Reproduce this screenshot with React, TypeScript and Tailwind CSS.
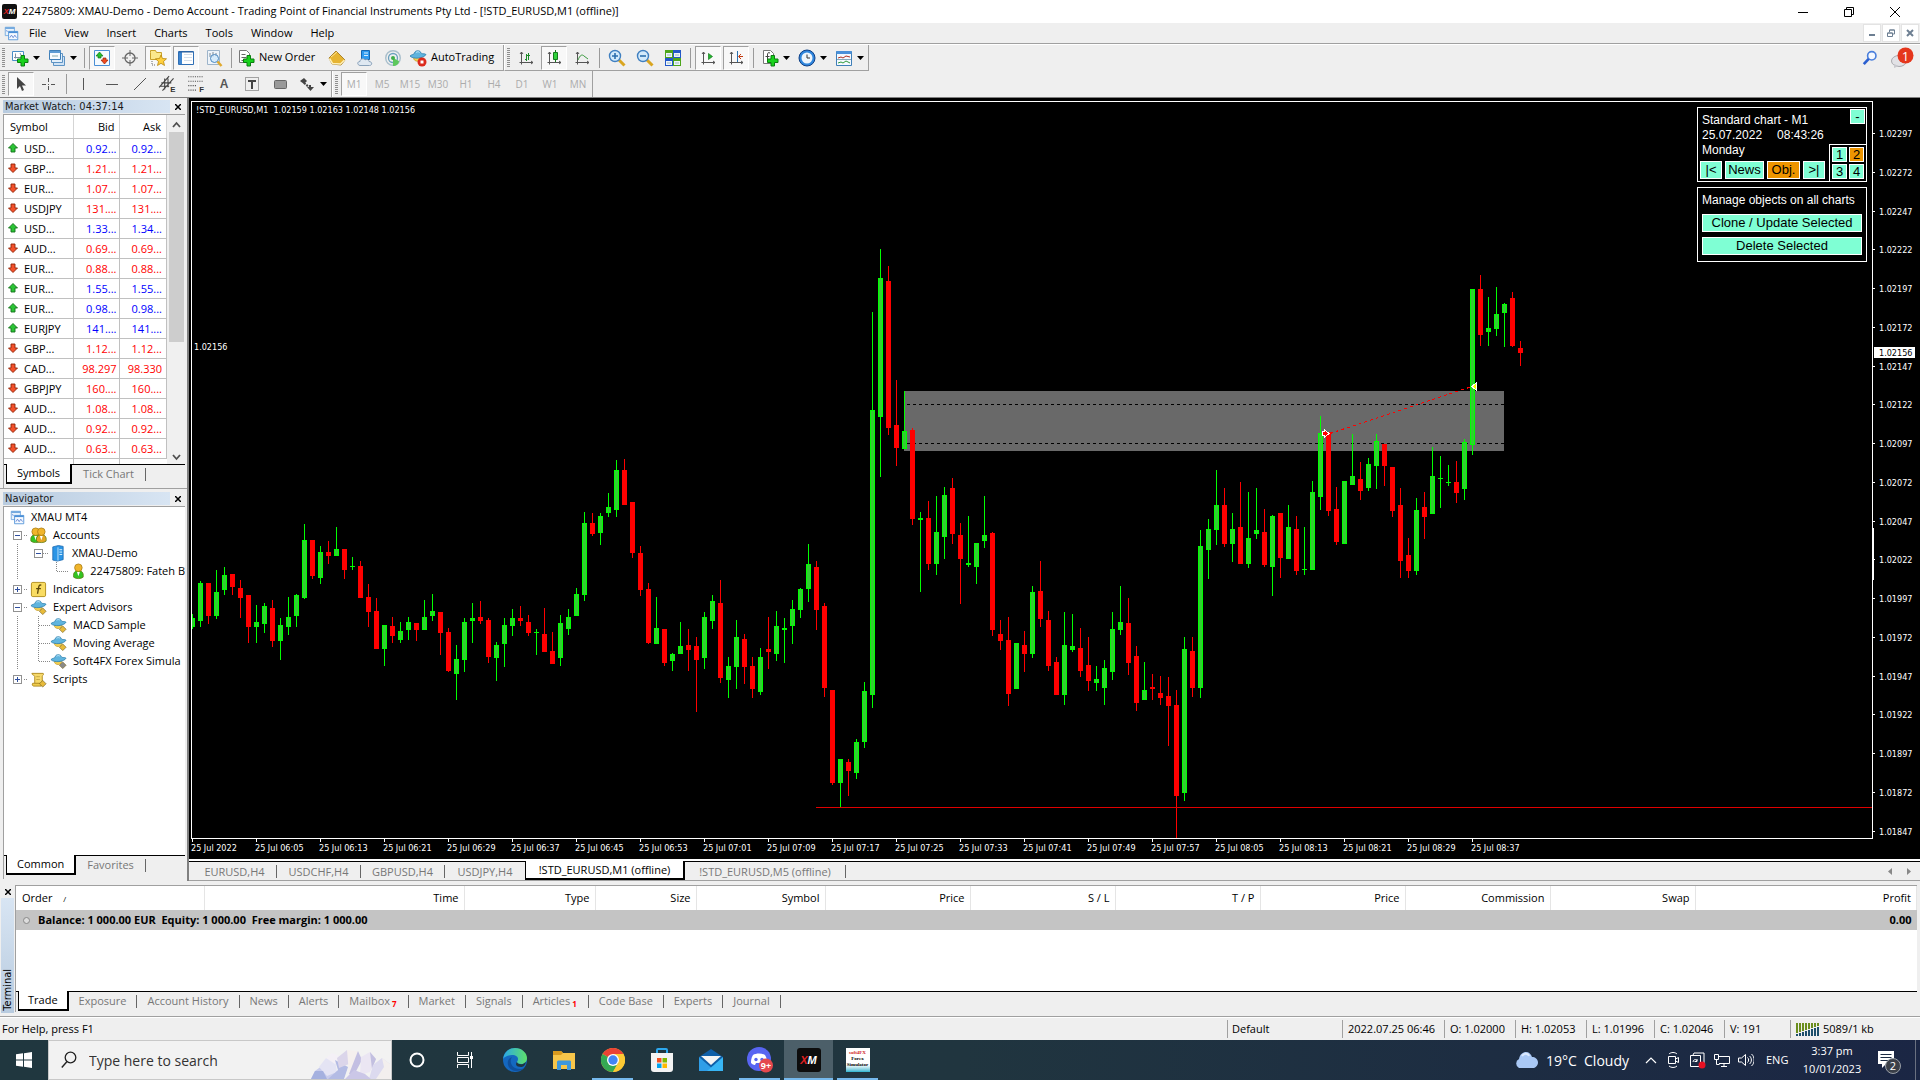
import React from 'react';

type Candle = [string, number, number, number, number];

// color, high, body top, body bottom, low
const candles: Candle[] = [
  ['g', 614, 618, 627, 629], ['g', 581, 583, 621, 627], ['r', 583, 583, 616, 624], ['g', 570, 592, 616, 619],
  ['g', 567, 575, 590, 595], ['r', 574, 574, 587, 595], ['r', 580, 588, 598, 618], ['r', 595, 595, 627, 643],
  ['g', 605, 622, 627, 643], ['g', 603, 606, 624, 633], ['r', 600, 608, 641, 647], ['g', 618, 625, 641, 660],
  ['g', 597, 617, 627, 635], ['g', 594, 595, 616, 627], ['g', 524, 540, 598, 599], ['r', 540, 540, 576, 579],
  ['g', 546, 552, 578, 584], ['r', 541, 552, 556, 564], ['g', 527, 549, 556, 556], ['r', 549, 549, 570, 579],
  ['g', 557, 566, 567, 570], ['r', 561, 566, 598, 598], ['r', 584, 597, 612, 627], ['r', 598, 611, 649, 649],
  ['g', 625, 625, 649, 666], ['r', 617, 626, 636, 643], ['g', 622, 631, 640, 643], ['g', 617, 622, 630, 640],
  ['r', 623, 623, 630, 641], ['g', 600, 617, 630, 630], ['g', 594, 611, 616, 621], ['r', 612, 612, 633, 655],
  ['r', 628, 632, 671, 672], ['g', 645, 659, 674, 700], ['g', 618, 622, 660, 672], ['g', 603, 618, 621, 643],
  ['r', 601, 617, 621, 624], ['r', 618, 620, 657, 663], ['g', 642, 645, 658, 681], ['g', 618, 625, 644, 667],
  ['g', 609, 618, 626, 636], ['r', 606, 618, 621, 626], ['r', 615, 622, 633, 636], ['g', 629, 632, 633, 655],
  ['r', 608, 634, 652, 652], ['r', 632, 651, 664, 664], ['g', 615, 623, 658, 666], ['g', 609, 617, 629, 635],
  ['g', 588, 594, 616, 616], ['g', 512, 523, 595, 601], ['r', 513, 523, 534, 536], ['g', 513, 516, 533, 545],
  ['g', 493, 507, 513, 517], ['g', 460, 470, 510, 517], ['r', 459, 470, 505, 505], ['r', 502, 502, 553, 558],
  ['r', 546, 553, 590, 596], ['r', 583, 589, 643, 644], ['g', 597, 628, 644, 644], ['r', 629, 629, 663, 666],
  ['g', 653, 654, 661, 671], ['g', 622, 646, 654, 654], ['r', 629, 645, 650, 671], ['r', 637, 646, 660, 712],
  ['g', 612, 617, 658, 669], ['g', 595, 601, 621, 629], ['r', 580, 603, 678, 683], ['g', 657, 666, 680, 698],
  ['g', 620, 637, 667, 689], ['r', 634, 639, 667, 684], ['r', 657, 666, 689, 698], ['g', 648, 657, 692, 695],
  ['r', 617, 649, 652, 669], ['g', 611, 626, 654, 661], ['g', 618, 628, 630, 663], ['g', 600, 609, 626, 644],
  ['g', 588, 589, 610, 618], ['g', 544, 564, 589, 602], ['r', 561, 567, 610, 630], ['r', 603, 606, 688, 697],
  ['r', 690, 690, 783, 785], ['g', 759, 759, 783, 807], ['r', 759, 762, 771, 796], ['g', 739, 742, 773, 779],
  ['g', 682, 691, 742, 748], ['g', 312, 410, 695, 708], ['g', 249, 278, 417, 477], ['r', 266, 281, 428, 435],
  ['r', 380, 425, 448, 466], ['g', 391, 431, 449, 449], ['r', 428, 430, 519, 525], ['g', 512, 518, 520, 592],
  ['r', 501, 518, 564, 570], ['g', 496, 532, 564, 575], ['g', 487, 495, 537, 559], ['r', 478, 488, 534, 544],
  ['r', 523, 535, 559, 604], ['g', 516, 563, 565, 567], ['g', 543, 543, 567, 584], ['g', 496, 535, 541, 548],
  ['r', 532, 533, 630, 636], ['r', 620, 634, 641, 650], ['r', 617, 640, 694, 706], ['g', 643, 643, 689, 689],
  ['r', 631, 645, 654, 672], ['g', 586, 592, 654, 658], ['r', 561, 591, 619, 627], ['r', 611, 620, 666, 671],
  ['r', 657, 662, 695, 695], ['g', 612, 645, 695, 705], ['g', 614, 646, 650, 652], ['r', 628, 648, 671, 677],
  ['r', 637, 665, 681, 691], ['g', 666, 679, 683, 691], ['g', 660, 668, 688, 705], ['g', 612, 629, 672, 680],
  ['g', 586, 622, 630, 635], ['r', 598, 623, 663, 675], ['r', 646, 656, 703, 711], ['g', 662, 690, 700, 700],
  ['r', 674, 687, 689, 700], ['r', 676, 693, 698, 705], ['r', 677, 696, 706, 746], ['r', 690, 705, 796, 838],
  ['g', 637, 649, 793, 801], ['r', 637, 651, 688, 697], ['g', 530, 546, 688, 698], ['g', 519, 529, 550, 579],
  ['g', 470, 505, 530, 545], ['r', 488, 505, 544, 547], ['g', 513, 529, 544, 562], ['r', 482, 527, 564, 564],
  ['g', 492, 538, 564, 568], ['g', 488, 530, 534, 539], ['r', 509, 532, 565, 567], ['g', 515, 516, 567, 596],
  ['r', 513, 513, 558, 578], ['g', 505, 527, 559, 559], ['r', 516, 529, 571, 575], ['g', 527, 569, 570, 575],
  ['g', 481, 492, 570, 570], ['g', 416, 433, 497, 510], ['r', 432, 432, 511, 516], ['r', 487, 509, 542, 545],
  ['g', 481, 481, 544, 544], ['g', 434, 476, 485, 485], ['r', 462, 479, 491, 500], ['g', 458, 464, 488, 491],
  ['g', 434, 441, 466, 489], ['r', 444, 444, 466, 486], ['r', 467, 467, 511, 517], ['r', 488, 505, 561, 578],
  ['r', 538, 555, 571, 578], ['g', 498, 510, 571, 575], ['r', 492, 507, 517, 539], ['g', 447, 476, 514, 514],
  ['g', 456, 478, 479, 508], ['g', 465, 482, 483, 486], ['r', 461, 482, 493, 503], ['g', 439, 442, 489, 500],
  ['g', 289, 289, 445, 455], ['r', 275, 289, 335, 346], ['g', 297, 328, 332, 346], ['g', 287, 314, 329, 336],
  ['g', 303, 304, 313, 347], ['r', 292, 298, 346, 347], ['r', 341, 348, 353, 366],
];

const quotes: [string, string, string, string][] = [
  ['up', 'USD...', '0.92...', '0.92...'],
  ['down', 'GBP...', '1.21...', '1.21...'],
  ['down', 'EUR...', '1.07...', '1.07...'],
  ['down', 'USDJPY', '131....', '131....'],
  ['up', 'USD...', '1.33...', '1.34...'],
  ['down', 'AUD...', '0.69...', '0.69...'],
  ['down', 'EUR...', '0.88...', '0.88...'],
  ['up', 'EUR...', '1.55...', '1.55...'],
  ['up', 'EUR...', '0.98...', '0.98...'],
  ['up', 'EURJPY', '141....', '141....'],
  ['down', 'GBP...', '1.12...', '1.12...'],
  ['down', 'CAD...', '98.297', '98.330'],
  ['down', 'GBPJPY', '160....', '160....'],
  ['down', 'AUD...', '1.08...', '1.08...'],
  ['down', 'AUD...', '0.92...', '0.92...'],
  ['down', 'AUD...', '0.63...', '0.63...'],
];

const timeLabels = Array.from({ length: 21 }, (_, i) => {
  if (i === 0) return '25 Jul 2022';
  const m = 5 + 8 * (i - 1);
  const two = (n: number) => String(n).padStart(2, '0');
  return `25 Jul ${two(6 + Math.floor(m / 60))}:${two(m % 60)}`;
});

const priceLabels = Array.from({ length: 19 }, (_, i) => ((102297 - 25 * i) / 100000).toFixed(5));

const Svg: React.FC<{ s?: number; children: React.ReactNode }> = ({ s = 18, children }) => (
  <svg width={s} height={s} viewBox="0 0 18 18" fill="none" className="shrink-0" aria-hidden="true">
    {children}
  </svg>
);

const Caret = () => (
  <svg width="7" height="4" viewBox="0 0 7 4" className="shrink-0" aria-hidden="true">
    <path d="M0 0h7L3.500 4z" fill="#000" />
  </svg>
);

const GreenPlus = () => (
  <path d="M10 6.500h3.500v3.500H17v3.500h-3.500V17H10v-3.500H6.500V10H10z" fill="#18d21c" stroke="#0b7d10" />
);

const AxisIcon: React.FC<{ children: React.ReactNode }> = ({ children }) => (
  <Svg>
    <path d="M4.500 3v12.500M2.500 13.500H16M3 5l1.500-2L6 5M14 12l2 1.500L14 15" stroke="#555" />
    {children}
  </Svg>
);

const ToolButton: React.FC<{ label: string; pressed?: boolean; children: React.ReactNode }> = ({
  label,
  pressed,
  children,
}) => (
  <button
    type="button"
    aria-label={label}
    className={
      pressed
        ? 'flex h-6 w-[26px] mx-px shrink-0 items-center justify-center border border-[#a0a0a0] border-r-white border-b-white bg-[#f8f8f8]'
        : 'flex h-6 w-7 shrink-0 items-center justify-center'
    }
  >
    {children}
  </button>
);

const DropButton: React.FC<{ label: string; children: React.ReactNode }> = ({ label, children }) => (
  <button type="button" aria-label={label} className="flex h-6 w-[37px] shrink-0 items-center justify-center gap-1">
    {children}
    <Caret />
  </button>
);

const Sep = () => <div className="mx-[3px] h-5 w-px shrink-0 bg-[#9a9a9a]" />;

const Grip = () => (
  <div className="flex w-[7px] shrink-0 flex-col items-center gap-px">
    {Array.from({ length: 10 }, (_, i) => (
      <div key={i} className="h-px w-[3px] bg-[#8f8f8f]" />
    ))}
  </div>
);

const ChartsIcon: React.FC<{ s?: number }> = ({ s }) => (
  <Svg s={s}>
    <path d="M1.500 1.500h11v10h-11z" fill="#e8f3fc" stroke="#6ba4dc" />
    <path d="M1.500 2.500h11" stroke="#6ba4dc" strokeWidth="2" />
    <path d="M5.500 6.500h11v10h-11z" fill="#f4f9ff" stroke="#4a8fd6" />
    <path d="M5.500 7.500h11" stroke="#4a8fd6" strokeWidth="2" />
    <path d="M7 14l2-3 2 3 2-3 2 3" stroke="#5a7fd0" />
    <path d="M3 5l1 2" stroke="#5a7fd0" />
  </Svg>
);

const HatIcon: React.FC<{ tag: string; s?: number }> = ({ tag, s }) => (
  <Svg s={s}>
    <path d="M4.500 8.500c0 5 8 5 8 0z" fill="#f3cf52" stroke="#c39a1f" strokeWidth=".7" />
    <path d="M1 7c2-2 4-1 4.500-3C6 1 11.500 1 12 4c.5 1.500 3 0 5 1.500C15 9.500 4 10.500 1 7z" fill="#5fb4de" stroke="#2d7fae" strokeWidth=".8" />
    <path d="M7 3.500c1-1 3-1 3.500 0" stroke="#c6e9fa" />
    {tag === 'stop' ? (
      <>
        <circle cx="13" cy="13" r="4.500" fill="#dc2a1c" />
        <path d="M11.500 11.500h3v3h-3z" fill="#fff" />
      </>
    ) : (
      <path d="M13.500 9.500l3.500 3.500-3.500 3.500L10 13z" fill={tag} stroke="#7a6420" strokeWidth=".7" />
    )}
  </Svg>
);

const MenuBar = () => (
  <nav className="flex h-5 shrink-0 items-center bg-[#efefef] pl-1 text-[11px] leading-5">
    <ChartsIcon s={15} />
    <div className="flex flex-1 gap-[18px] pl-[10px]">
      {['File', 'View', 'Insert', 'Charts', 'Tools', 'Window', 'Help'].map((m) => (
        <button key={m} type="button">
          {m}
        </button>
      ))}
    </div>
    <div className="flex gap-px pr-px">
      <button type="button" aria-label="Minimize chart" className="flex h-[18px] w-[18px] items-center justify-center border border-[#e3e3e3] bg-white">
        <svg width="8" height="8"><path d="M1 6h6" stroke="#6d7f92" strokeWidth="2" /></svg>
      </button>
      <button type="button" aria-label="Restore chart" className="flex h-[18px] w-[18px] items-center justify-center border border-[#e3e3e3] bg-white">
        <svg width="8" height="8"><path d="M2.500 3V1h5v4H6M.5 4h5v3.500h-5zM2.500 1h5M.5 4h5" stroke="#6d7f92" fill="none" /></svg>
      </button>
      <button type="button" aria-label="Close chart" className="flex h-[18px] w-[18px] items-center justify-center border border-[#e3e3e3] bg-white">
        <svg width="8" height="8"><path d="M1 1l6 6M7 1L1 7" stroke="#6d7f92" strokeWidth="2" /></svg>
      </button>
    </div>
  </nav>
);

const MainToolbar = () => (
  <div className="flex h-[26px] items-center">
    <div className="flex h-[26px] items-center border-r border-b border-[#a0a0a0]">
      <Grip />
      <DropButton label="New chart">
        <Svg>
          <path d="M1.500 2.500h11v9h-11z" fill="#fff" stroke="#4a8fc8" />
          <path d="M4.500 4.500v5M3 8.500h7M9 4l1 2" stroke="#7a8fa5" />
          <GreenPlus />
        </Svg>
      </DropButton>
      <DropButton label="Profiles">
        <Svg>
          <path d="M5.500 7.500h11v9h-11z" fill="#cfe2f5" stroke="#5d93c4" />
          <path d="M3.500 4.500h11v9h-11z" fill="#e3effa" stroke="#5d93c4" />
          <path d="M1.500 1.500h11v9h-11z" fill="#f5faff" stroke="#3f7fb8" />
          <path d="M1.500 3h11" stroke="#5d9bd4" strokeWidth="2" />
          <path d="M4 7h6" stroke="#8aa" />
        </Svg>
      </DropButton>
      <Sep />
      <ToolButton label="Market Watch" pressed>
        <Svg>
          <path d="M1.500 1.500h15v15h-15z" fill="#f4faff" stroke="#4a8fd6" />
          <path d="M6.500 3l3.500 4H8v2H5V7H3z" fill="#23c02b" stroke="#14741a" strokeWidth=".7" />
          <path d="M11.500 15L8 11h2V9h3v2h2z" fill="#ef4a20" stroke="#9a2408" strokeWidth=".7" />
        </Svg>
      </ToolButton>
      <ToolButton label="Data Window">
        <Svg>
          <circle cx="9" cy="9" r="5" stroke="#666" strokeWidth="1.300" />
          <path d="M9 1v6M9 11v6M1 9h6M11 9h6" stroke="#666" />
        </Svg>
      </ToolButton>
      <ToolButton label="Navigator" pressed>
        <Svg>
          <path d="M1.500 3.500v-2h5l1 2h5v7h-11z" fill="#fbe88c" stroke="#c8a12a" />
          <path d="M3 12v4h4" stroke="#666" strokeDasharray="1 1" />
          <path d="M12 6l1.500 3.500 4 .3-3 2.700 1 4-3.500-2.200L8.500 16.500l1-4-3-2.700 4-.3z" fill="#ffcf3d" stroke="#b8860b" strokeWidth=".8" />
        </Svg>
      </ToolButton>
      <ToolButton label="Terminal" pressed>
        <Svg>
          <path d="M1.500 2.500h15v13h-15z" fill="#fff" stroke="#2f6fb5" />
          <path d="M2 3h3v12H2z" fill="#3f86d0" />
          <path d="M7 5.500h8M7 8.500h8M7 11.500h8" stroke="#d4deea" />
          <path d="M2 3h14" stroke="#2b5d98" />
        </Svg>
      </ToolButton>
      <ToolButton label="Strategy Tester">
        <Svg>
          <path d="M2.500 1.500h12v14h-12z" fill="#eef4fa" stroke="#9db4ca" />
          <path d="M5 4v4M8 3v5M11 4v3" stroke="#7a8a99" />
          <circle cx="9.500" cy="9.500" r="4" fill="#cfe8fb" fillOpacity=".8" stroke="#4b88c0" />
          <path d="M12.500 12.500L16.500 17" stroke="#e0a92e" strokeWidth="2.500" />
        </Svg>
      </ToolButton>
      <Sep />
      <button type="button" className="flex h-6 w-[88px] items-center gap-1 pl-[2px] text-[11px] whitespace-nowrap">
        <Svg>
          <path d="M2.500 1.500h7l3 3v9h-10z" fill="#fff" stroke="#777" />
          <path d="M4.500 5.500h4M4.500 8.500h5M4.500 11.500h3" stroke="#666" />
          <GreenPlus />
        </Svg>
        New Order
      </button>
      <ToolButton label="MetaEditor">
        <Svg>
          <path d="M1 9l7-7 9 9-4 5-9-1z" fill="#e6b432" stroke="#9b7013" strokeWidth=".8" />
          <path d="M1.500 9.500l3 5 8 .5 4-4" stroke="#fff0b8" strokeWidth="1.500" />
          <path d="M3 8l6-5" stroke="#ffe694" />
        </Svg>
      </ToolButton>
      <ToolButton label="Virtual Hosting">
        <Svg>
          <path d="M5.500 1.500h8v9h-8z" fill="#2f9bf0" stroke="#1667b0" />
          <path d="M8 4h4M8 6.500h4" stroke="#d7efff" />
          <path d="M4 16.500c-3-.5-3-4 0-4 0-3 4-3.500 5-1.500 2-1.500 4 0 4 1.500 3.500 0 3.500 4 .5 4z" fill="#dfe8f1" stroke="#8aa2ba" />
        </Svg>
      </ToolButton>
      <ToolButton label="Signals">
        <Svg>
          <circle cx="9" cy="9" r="7.300" stroke="#a9bfcc" strokeWidth="1.400" />
          <circle cx="9" cy="9" r="4.500" stroke="#6aa0bd" strokeWidth="1.300" />
          <path d="M9 9v8c3 0 6-2 6-5z" fill="#5dc85d" />
          <circle cx="9" cy="9" r="2" fill="#3fae49" />
        </Svg>
      </ToolButton>
      <button type="button" className="flex h-6 w-24 items-center gap-1 pl-[2px] text-[11px] whitespace-nowrap">
        <HatIcon tag="stop" />
        AutoTrading
      </button>
    </div>
    <div className="flex h-[26px] items-center border-r border-b border-l border-[#a0a0a0] border-l-white">
      <Grip />
      <ToolButton label="Bar Chart">
        <AxisIcon>
          <path d="M9.500 5v7M8 10.500h1.500M9.500 6.500H13M11.500 4v7" stroke="#1c8a28" />
        </AxisIcon>
      </ToolButton>
      <ToolButton label="Candlesticks" pressed>
        <AxisIcon>
          <path d="M10.500 1v12" stroke="#147a1d" />
          <path d="M8.500 3.500h4v7h-4z" fill="#2fd23a" stroke="#147a1d" />
        </AxisIcon>
      </ToolButton>
      <ToolButton label="Line Chart">
        <AxisIcon>
          <path d="M5 11c2-5 4-6 6-4l4 3" stroke="#3a9a3f" />
        </AxisIcon>
      </ToolButton>
      <Sep />
      <ToolButton label="Zoom In">
        <Svg>
          <path d="M11 11l5.500 5.500" stroke="#d9a520" strokeWidth="3" />
          <circle cx="7" cy="7" r="5.500" fill="#d3eafb" stroke="#3f7fc0" strokeWidth="1.400" />
          <path d="M7 4v6M4 7h6" stroke="#2d6fae" strokeWidth="1.600" />
        </Svg>
      </ToolButton>
      <ToolButton label="Zoom Out">
        <Svg>
          <path d="M11 11l5.500 5.500" stroke="#d9a520" strokeWidth="3" />
          <circle cx="7" cy="7" r="5.500" fill="#d3eafb" stroke="#3f7fc0" strokeWidth="1.400" />
          <path d="M4 7h6" stroke="#2d6fae" strokeWidth="1.600" />
        </Svg>
      </ToolButton>
      <ToolButton label="Tile Windows">
        <Svg>
          <path d="M1 1h8v8H1zM9 9h8v8H9z" fill="#4ea61c" />
          <path d="M9 1h8v8H9zM1 9h8v8H1z" fill="#2358c8" />
          <path d="M2 4h6v4H2zM10 4h6v4h-6zM2 12h6v4H2zM10 12h6v4h-6z" fill="#eef4fb" />
          <path d="M3 6h4M11 6h4M3 14h4M11 14h4" stroke="#9bb" />
        </Svg>
      </ToolButton>
      <Sep />
      <ToolButton label="Auto Scroll" pressed>
        <AxisIcon>
          <path d="M9.500 4.500v6l4-3z" fill="#23b52e" stroke="#147a1d" strokeWidth=".7" />
        </AxisIcon>
      </ToolButton>
      <ToolButton label="Chart Shift" pressed>
        <AxisIcon>
          <path d="M10.500 2v11" stroke="#2a70b0" />
          <path d="M16 7.500h-4M14 5l-2.500 2.500L14 10" stroke="#c33a10" />
        </AxisIcon>
      </ToolButton>
      <Sep />
      <DropButton label="Indicators">
        <Svg>
          <path d="M2.500 1.500h7l3 3v10h-10z" fill="#fff" stroke="#777" />
          <path d="M9 4c-2-1-2.500 0-2.500 2v6M4.500 7.500h4" stroke="#444" />
          <GreenPlus />
        </Svg>
      </DropButton>
      <DropButton label="Periods">
        <Svg>
          <circle cx="9" cy="9" r="8" fill="#2f86dd" stroke="#0f3f86" />
          <circle cx="9" cy="9" r="5.500" fill="#eef5fc" />
          <path d="M9 5.500V9h3" stroke="#333" />
        </Svg>
      </DropButton>
      <DropButton label="Templates">
        <Svg>
          <path d="M1.500 2.500h15v14h-15z" fill="#f4f9ff" stroke="#3f7fb8" />
          <path d="M1.500 3.500h15" stroke="#4a90d9" strokeWidth="3" />
          <path d="M3 9l3-1 2 1 3-2 4 1" stroke="#b03020" />
          <path d="M2 10.500h14" stroke="#8ab" />
          <path d="M3 14l3-1 2 1 3-2 4 2" stroke="#2f9a3c" />
        </Svg>
      </DropButton>
    </div>
    <div className="flex-1" />
    <button type="button" aria-label="Search" className="mr-3">
      <Svg s={16}>
        <circle cx="11" cy="6.500" r="4.700" stroke="#4a7fdc" strokeWidth="1.800" fill="#f4f8ff" />
        <path d="M7.500 10L2 16" stroke="#2a5fd0" strokeWidth="3" />
      </Svg>
    </button>
    <button type="button" aria-label="Notifications" className="relative mr-[6px] h-6 w-6">
      <svg width="24" height="24" viewBox="0 0 24 24" aria-hidden="true">
        <ellipse cx="9" cy="15" rx="7.500" ry="5.500" fill="#e2e2e6" stroke="#a9a9ae" />
        <path d="M4 18l0 4 5-2z" fill="#c9c9ce" />
        <circle cx="15.500" cy="9.500" r="8" fill="#e5361c" />
      </svg>
      <span className="absolute top-0 right-0 w-[17px] text-center text-[13px] leading-5 text-white">1</span>
    </button>
  </div>
);

const LineToolbar = () => (
  <div className="flex h-[26px] items-center">
    <div className="flex h-[26px] items-center border-r border-[#a0a0a0]">
      <Grip />
      <ToolButton label="Cursor" pressed>
        <Svg><path d="M5 2v12l3-3 2 5 2-1-2-4.500h4z" fill="#444" /></Svg>
      </ToolButton>
      <ToolButton label="Crosshair">
        <Svg><path d="M8.500 3v4M8.500 11v4M2 9.500h4M11 9.500h4M8 9.500h1" stroke="#555" /></Svg>
      </ToolButton>
      <Sep />
      <ToolButton label="Vertical Line">
        <Svg><path d="M8.500 3v12" stroke="#555" /></Svg>
      </ToolButton>
      <ToolButton label="Horizontal Line">
        <Svg><path d="M3 9.500h12" stroke="#555" /></Svg>
      </ToolButton>
      <ToolButton label="Trendline">
        <Svg><path d="M3 15L15 3" stroke="#555" /></Svg>
      </ToolButton>
      <ToolButton label="Equidistant Channel">
        <Svg s={20}>
          <path d="M1 12L10 2M4 15L14 4M3 8h9M2 11h8M6 4v10M9 4v8" stroke="#444" />
          <text x="11" y="16" fontSize="7" fontWeight="bold" fill="#333" fontFamily="Liberation Sans, sans-serif">E</text>
        </Svg>
      </ToolButton>
      <ToolButton label="Fibonacci Retracement">
        <Svg s={20}>
          <path d="M2 2.500h14M2 6.500h14M2 10.500h8M2 14.500h8" stroke="#555" strokeDasharray="1 1" />
          <text x="12" y="16" fontSize="7" fontWeight="bold" fill="#333" fontFamily="Liberation Sans, sans-serif">F</text>
        </Svg>
      </ToolButton>
      <ToolButton label="Text">
        <span className="font-['Liberation_Sans',sans-serif] text-[12px] font-bold text-[#555]">A</span>
      </ToolButton>
      <ToolButton label="Text Label">
        <Svg>
          <path d="M2.500 2.500h13v13h-13z" stroke="#555" strokeDasharray="1 1" />
          <path d="M5 6h8M9 6v8" stroke="#444" strokeWidth="2" />
        </Svg>
      </ToolButton>
      <ToolButton label="Rectangle">
        <Svg><rect x="3.500" y="5.500" width="12" height="8" rx="1" fill="#999" stroke="#666" /></Svg>
      </ToolButton>
      <DropButton label="Arrows">
        <Svg>
          <path d="M2 6l4-3 3 3-3 3z" fill="#444" />
          <path d="M6 8l5 4" stroke="#444" strokeDasharray="2 1" strokeWidth="2" />
          <path d="M9 12h7l-3.500 4z" fill="#444" />
          <path d="M12 10v3" stroke="#444" strokeWidth="2" />
        </Svg>
      </DropButton>
    </div>
    <div className="flex h-[26px] items-center border-r border-l border-[#a0a0a0] border-l-white">
      <Grip />
      {['M1', 'M5', 'M15', 'M30', 'H1', 'H4', 'D1', 'W1', 'MN'].map((p, i) => (
        <ToolButton key={p} label={p} pressed={i === 0}>
          <span className="text-[10px] text-[#ababab]">{p}</span>
        </ToolButton>
      ))}
    </div>
  </div>
);

const PanelTitle: React.FC<{ title: string }> = ({ title }) => (
  <div className="flex h-[13px] shrink-0 items-center">
    <h2 className="h-[13px] flex-1 bg-linear-to-r from-[#b8cbdf] to-[#d8e5f3] pl-[2px] text-[11px] leading-[13px] font-['DejaVu_Sans_Condensed','Open_Sans',sans-serif] whitespace-nowrap text-[#1a1a1a]">
      {title}
    </h2>
    <button type="button" aria-label={`Close ${title}`} className="flex w-[15px] items-center justify-center">
      <svg width="6" height="6"><path d="M0 0l6 6M6 0L0 6" stroke="#000" strokeWidth="1.500" /></svg>
    </button>
  </div>
);

const PanelTabs: React.FC<{ tabs: string[] }> = ({ tabs }) => (
  <div className="flex h-6 shrink-0 border-t border-black bg-[#efefef] pl-[2px]">
    <button type="button" className="-mt-px h-[20px] border border-t-0 border-r-2 border-b-2 border-black bg-white px-[10px] text-[11px] leading-[18px]">
      {tabs[0]}
    </button>
    <button type="button" className="h-[18px] px-[11px] text-[11px] leading-[18px] text-[#777]">{tabs[1]}</button>
    <div className="mt-[3px] h-[13px] w-px bg-[#666]" />
  </div>
);

const QuoteArrow: React.FC<{ dir: string }> = ({ dir }) =>
  dir === 'up' ? (
    <svg width="10" height="10" viewBox="0 0 10 10" aria-hidden="true">
      <path d="M5 .5l4.500 4.500H7v4H3V5H.5z" fill="#2bc435" stroke="#127019" strokeWidth=".9" />
    </svg>
  ) : (
    <svg width="10" height="10" viewBox="0 0 10 10" aria-hidden="true">
      <path d="M5 9.500L.5 5H3V1h4v4h2.500z" fill="#f4512a" stroke="#8f2408" strokeWidth=".9" />
    </svg>
  );

const MarketWatch = () => (
  <section className="flex h-[391px] shrink-0 flex-col border-b border-[#a0a0a0] pt-[2px] pr-[2px] pl-[3px]">
    <PanelTitle title="Market Watch: 04:37:14" />
    <div className="mt-px flex min-h-0 flex-1 flex-col border-t border-l border-[#a0a0a0] bg-white">
      <div className="flex min-h-0 flex-1 overflow-hidden">
        <div className="min-w-0 flex-1">
          <table className="w-full table-fixed border-collapse text-[11px] leading-[19px]">
            <thead>
              <tr className="h-[23px]">
                <th className="w-[69px] border-r border-b border-[#d5d5d5] border-b-[#c0c0c0] pl-[6px] text-left font-normal">Symbol</th>
                <th className="w-[46px] border-r border-b border-[#d5d5d5] border-b-[#c0c0c0] pr-1 text-right font-normal">Bid</th>
                <th className="border-r border-b border-[#d5d5d5] border-b-[#c0c0c0] pr-[5px] text-right font-normal">Ask</th>
              </tr>
            </thead>
            <tbody>
              {quotes.map(([dir, symbol, bid, ask], i) => (
                <tr key={i} className="h-5">
                  <td className="border-r border-b border-[#c0c0c0] pl-1">
                    <div className="flex items-center gap-[6px]">
                      <QuoteArrow dir={dir} />
                      {symbol}
                    </div>
                  </td>
                  <td className={`border-r border-b border-[#c0c0c0] pr-[2px] text-right ${dir === 'up' ? 'text-[#0000ff]' : 'text-[#ff0000]'}`}>{bid}</td>
                  <td className={`border-r border-b border-[#c0c0c0] pr-[4px] text-right ${dir === 'up' ? 'text-[#0000ff]' : 'text-[#ff0000]'}`}>{ask}</td>
                </tr>
              ))}
              <tr className="h-5">
                <td className="border-r border-[#c0c0c0]" />
                <td className="border-r border-[#c0c0c0]" />
                <td />
              </tr>
            </tbody>
          </table>
        </div>
        <div className="flex w-[18px] flex-col items-center bg-[#f0f0f0] text-[#505050]">
          <svg width="9" height="17" className="shrink-0"><path d="M1 12l3.500-4L8 12" stroke="currentColor" strokeWidth="1.800" fill="none" /></svg>
          <div className="h-[210px] w-[15px] bg-[#cdcdcd]" />
          <div className="flex-1" />
          <svg width="9" height="14" className="shrink-0"><path d="M1 5l3.500 4L8 5" stroke="currentColor" strokeWidth="1.800" fill="none" /></svg>
        </div>
      </div>
      <PanelTabs tabs={['Symbols', 'Tick Chart']} />
    </div>
  </section>
);

const Toggle: React.FC<{ open: boolean }> = ({ open }) => (
  <svg width="9" height="9" className="shrink-0" aria-hidden="true">
    <rect x=".5" y=".5" width="8" height="8" fill="#fff" stroke="#919191" />
    <path d={open ? 'M2 4.500h5' : 'M2 4.500h5M4.500 2v5'} stroke="#2f4f9f" />
  </svg>
);

const PersonShape: React.FC<{ x: number; body?: string }> = ({ x, body = '#33c422' }) => (
  <g transform={`translate(${x} 0)`}>
    <path d="M1 15c-1-5 2-7 5-7s6 2 5 7c-2 2-8 2-10 0z" fill={body} stroke="#5c7a12" strokeWidth=".8" />
    <circle cx="6" cy="5" r="4" fill="#f0b52c" stroke="#a87a12" strokeWidth=".8" />
    <path d="M4.500 9.500L6 14l1.500-4.500" fill="#fff" />
  </g>
);

const Dots: React.FC<{ w?: number }> = ({ w = 6 }) => (
  <svg width={w} height="1" className="shrink-0" aria-hidden="true">
    <path d={`M0 .5h${w}`} stroke="#888" strokeDasharray="1 1" />
  </svg>
);

const Branch: React.FC<{ last?: boolean }> = ({ last }) => (
  <svg width="12" height="18" className="shrink-0" aria-hidden="true">
    <path d={last ? 'M.5 0v9.500M1 9.500h11' : 'M.5 0v18M1 9.500h11'} stroke="#888" strokeDasharray="1 1" fill="none" />
  </svg>
);

// the dotted line that joins the root items
const Trunk: React.FC = () => (
  <svg width="13" height="18" className="shrink-0" aria-hidden="true">
    <path d="M4.500 0v18" stroke="#888" strokeDasharray="1 1" />
  </svg>
);

const Navigator = () => (
  <section className="flex min-h-0 flex-1 flex-col pt-[3px] pr-[2px] pl-[3px]">
    <PanelTitle title="Navigator" />
    <div className="mt-px flex min-h-0 flex-1 flex-col border-t border-l border-[#a0a0a0] bg-white">
      <ul className="flex-1 overflow-hidden pt-px text-[11px] leading-[18px] whitespace-nowrap">
        <li className="flex h-[18px] items-center gap-[6px] pl-[6px]"><ChartsIcon s={15} />XMAU MT4</li>
        <li className="flex h-[18px] items-center gap-[2px] pl-[9px]">
          <Toggle open /><Dots w={4} />
          <Svg s={17}><PersonShape x={0} /><PersonShape x={6} body="#e3a622" /></Svg>
          <span className="pl-1">Accounts</span>
        </li>
        <li className="flex h-[18px] items-center pl-[9px]">
          <Trunk />
          <span className="w-2" /><Toggle open /><Dots />
          <Svg s={17}>
            <path d="M4 2l6-1.500 5 1v14L9 17l-5-1z" fill="#2b95e6" stroke="#1765ad" strokeWidth=".8" />
            <path d="M9.500 2.500v14" stroke="#bfe2fb" />
            <path d="M11 5h3M11 7.500h3M11 10h3" stroke="#e8f6ff" />
          </Svg>
          <span className="pl-[6px]">XMAU-Demo</span>
        </li>
        <li className="flex h-[18px] items-center pl-[9px]">
          <Trunk />
          <span className="w-[34px]" /><Branch last />
          <Svg s={17}><PersonShape x={5} /></Svg>
          <span className="pl-[5px]">22475809: Fateh B</span>
        </li>
        <li className="flex h-[18px] items-center gap-[2px] pl-[9px]">
          <Toggle open={false} /><Dots w={4} />
          <Svg s={17}>
            <rect x="1.500" y="1.500" width="15" height="15" rx="1.500" fill="#f9dc62" stroke="#b38e1c" />
            <path d="M12 4.500c-2-1-2.500.5-3 3l-1 6M6.500 8h5" stroke="#5a4508" strokeWidth="1.400" />
          </Svg>
          <span className="pl-1">Indicators</span>
        </li>
        <li className="flex h-[18px] items-center gap-[2px] pl-[9px]">
          <Toggle open /><Dots w={4} />
          <HatIcon tag="#e8bb3a" s={17} />
          <span className="pl-1">Expert Advisors</span>
        </li>
        {['MACD Sample', 'Moving Average', 'Soft4FX Forex Simula'].map((name, i) => (
          <li key={name} className="flex h-[18px] items-center pl-[9px]">
            <Trunk />
            <span className="w-3" /><Branch last={i === 2} />
            <HatIcon tag={i === 2 ? '#8a8a8a' : '#e8bb3a'} s={17} />
            <span className="pl-[6px]">{name}</span>
          </li>
        ))}
        <li className="flex h-[18px] items-center gap-[2px] pl-[9px]">
          <Toggle open={false} /><Dots w={4} />
          <Svg s={17}>
            <path d="M2 2.500h12c1 2-1 2-1 3v8H5v-8c0-1-3-1-3-3z" fill="#f6d96a" stroke="#b08c22" />
            <path d="M3 13h9v3H4c-2 0-2-3-1-3z" fill="#efcb4c" stroke="#b08c22" />
            <path d="M7 6h4M7 9h4" stroke="#9a7a20" strokeDasharray="1 1" />
            <path d="M13.500 10l3.500 3.500-3.500 3.500-3.500-3.500z" fill="#e8bb3a" stroke="#7a6420" strokeWidth=".7" />
          </Svg>
          <span className="pl-1">Scripts</span>
        </li>
      </ul>
      <PanelTabs tabs={['Common', 'Favorites']} />
    </div>
  </section>
);

const PlotButton: React.FC<{ className: string; active?: boolean; children: React.ReactNode }> = ({
  className,
  active,
  children,
}) => (
  <button
    type="button"
    className={`flex items-center justify-center border border-white whitespace-nowrap text-black ${active ? 'bg-[#ee9500]' : 'bg-[#7fffd4]'} ${className}`}
  >
    {children}
  </button>
);

const SimulatorPanel = () => (
  <div className="absolute top-[5px] right-[5px] w-[170px] font-['Liberation_Sans',sans-serif] text-[13px] text-white">
    <div className="flex h-[75px] flex-col border border-white bg-black">
      <div className="flex flex-1">
        <div className="flex-1 pt-[5px] pl-1 text-[12px] leading-[15px] whitespace-nowrap">
          <div>Standard chart - M1</div>
          <div className="flex gap-[15px]"><span>25.07.2022</span><span>08:43:26</span></div>
          <div>Monday</div>
        </div>
        <PlotButton className="mt-px mr-px h-[15px] w-[15px]">-</PlotButton>
      </div>
      <div className="flex items-end justify-between">
        <div className="flex gap-[3px] pb-[2px] pl-[2px] text-[13px]">
          <PlotButton className="h-[18px] w-[22px]">|&lt;</PlotButton>
          <PlotButton className="h-[18px] w-[39px]">News</PlotButton>
          <PlotButton className="h-[18px] w-[33px]" active>Obj.</PlotButton>
          <PlotButton className="h-[18px] w-[22px]">&gt;|</PlotButton>
        </div>
        <div className="-mt-4 grid grid-cols-2 gap-[2px] border-t border-l border-white bg-black p-[2px]">
          <PlotButton className="h-[15px] w-[15px]">1</PlotButton>
          <PlotButton className="h-[15px] w-[15px]" active>2</PlotButton>
          <PlotButton className="h-[15px] w-[15px]">3</PlotButton>
          <PlotButton className="h-[15px] w-[15px]">4</PlotButton>
        </div>
      </div>
    </div>
    <div className="mt-[5px] flex h-[75px] flex-col gap-[5px] border border-white bg-black px-1 pt-1">
      <div className="text-[12px] leading-[17px] whitespace-nowrap">Manage objects on all charts</div>
      <PlotButton className="h-[18px] w-full">Clone / Update Selected</PlotButton>
      <PlotButton className="h-[18px] w-full">Delete Selected</PlotButton>
    </div>
  </div>
);

const Plot = () => (
  <svg className="h-full w-full" shapeRendering="crispEdges" role="img" aria-label="!STD_EURUSD,M1">
    <g transform="translate(-192 -102)">
      <rect x="904" y="391" width="600" height="60" fill="#696969" />
      <path d="M907 404.500h597M907 443.500h597" stroke="#000" strokeDasharray="3 3" />
      {candles.map(([c, high, top, bottom, low], i) => {
        const x = 192 + i * 8;
        const h = Math.max(1, bottom - top);
        const color = c === 'g' ? '#00ff00' : '#ff0000';
        return (
          <g key={i}>
            <rect x={x} y={high} width="1" height={low - high} fill={color} />
            <rect x={x - 2} y={top} width="5" height={h} fill={color} />
            {c === 'g' && h > 2 && <rect x={x - 1} y={top + 1} width="3" height={h - 2} fill="#32cd32" />}
          </g>
        );
      })}
      <path d="M1330 433.500L1472 386.500" stroke="#f00" strokeDasharray="3 3" />
      <path d="M1322.500 431.500h2v-2l4.500 4-4.500 4v-2h-2z" fill="#f00" stroke="#fff" />
      <path d="M1476.500 382.500v8l-4.500-4z" fill="#ff0" stroke="#fff" />
    </g>
    <rect x="624" y="705" width="100%" height="1" fill="#e00000" />
  </svg>
);

const Chart = () => (
  <section className="flex min-h-0 flex-1 bg-black pt-[3px] pl-[2px] font-['DejaVu_Sans_Condensed','Open_Sans',sans-serif] text-white">
    <div className="flex min-w-0 flex-1 flex-col">
      <div className="relative min-h-0 flex-1 overflow-hidden border border-white">
        <Plot />
        <span className="absolute top-[2px] left-1 text-[9px] leading-[13px] whitespace-pre">{'!STD_EURUSD,M1  1.02159 1.02163 1.02148 1.02156'}</span>
        <span className="absolute top-[239px] left-[2px] text-[9px] leading-[13px]">1.02156</span>
        <SimulatorPanel />
      </div>
      <svg className="h-5 w-full shrink-0 overflow-visible" aria-hidden="true">
        {timeLabels.map((t, i) => (
          <g key={t}>
            <rect x={1 + i * 64} y="0" width="1" height="3" fill="#fff" />
            <text x={i * 64} y="12" fontSize="9" fill="#fff">{t}</text>
          </g>
        ))}
      </svg>
    </div>
    <svg className="h-full w-[47px] shrink-0" aria-hidden="true">
      {priceLabels.map((p, i) => {
        const y = 32 + Math.round(i * 38.750);
        return (
          <g key={p}>
            <rect x="0" y={y} width="2" height="1" fill="#fff" />
            <text x="6" y={y + 4} fontSize="9" fill="#fff">{p}</text>
          </g>
        );
      })}
      <rect x="0" y="427" width="1" height="52" fill="#fff" />
      <rect x="1" y="246" width="41" height="11" fill="#fff" />
      <text x="6" y="255" fontSize="9" fill="#000">1.02156</text>
    </svg>
  </section>
);

const ChartTabs = () => (
  <div className="flex h-5 shrink-0 border-t border-b border-black border-b-[#a0a0a0] bg-[#efefef] pl-[4px] text-[11px] leading-[17px] whitespace-nowrap text-[#777]">
    {['EURUSD,H4', 'USDCHF,H4', 'GBPUSD,H4'].map((t) => (
      <div key={t} className="flex items-center">
        <button type="button" className="w-[83px] text-center">{t}</button>
        <div className="h-[13px] w-px bg-[#666]" />
      </div>
    ))}
    <button type="button" className="w-20 text-center">USDJPY,H4</button>
    <button type="button" className="-mt-px h-[19px] w-[160px] border border-t-0 border-r-2 border-b-2 border-black bg-white text-center text-black">
      !STD_EURUSD,M1 (offline)
    </button>
    <div className="flex items-center">
      <button type="button" className="w-[160px] text-center">!STD_EURUSD,M5 (offline)</button>
      <div className="h-[13px] w-px bg-[#666]" />
    </div>
    <div className="flex-1" />
    <div className="flex items-center gap-[15px] pr-[9px]">
      <svg width="4" height="7"><path d="M4 0v7L0 3.500z" fill="#888" /></svg>
      <svg width="4" height="7"><path d="M0 0v7l4-3.500z" fill="#888" /></svg>
    </div>
  </div>
);

const terminalTabs: [string, string?][] = [
  ['Exposure'], ['Account History'], ['News'], ['Alerts'], ['Mailbox', '7'], ['Market'],
  ['Signals'], ['Articles', '1'], ['Code Base'], ['Experts'], ['Journal'],
];

const terminalCols: [string, string][] = [
  ['Time', 'w-[260px]'], ['Type', 'w-[131px]'], ['Size', 'w-[101px]'], ['Symbol', 'w-[129px]'],
  ['Price', 'w-[145px]'], ['S / L', 'w-[145px]'], ['T / P', 'w-[145px]'], ['Price', 'w-[145px]'],
  ['Commission', 'w-[145px]'], ['Swap', 'w-[145px]'], ['Profit', ''],
];

const Terminal = () => (
  <section className="flex h-[136px] shrink-0 border-b border-[#a0a0a0] pt-1 pr-[3px]">
    <div className="flex w-[15px] shrink-0 flex-col items-center pb-[3px]">
      <button type="button" aria-label="Close terminal" className="flex h-[13px] items-center">
        <svg width="6" height="6"><path d="M0 0l6 6M6 0L0 6" stroke="#000" strokeWidth="1.500" /></svg>
      </button>
      <div className="flex w-[13px] flex-1 items-end justify-center bg-linear-to-b from-[#d8e5f3] to-[#b8cbdf] pb-[2px]">
        <span className="rotate-180 font-['DejaVu_Sans_Condensed','Open_Sans',sans-serif] text-[11px] leading-[13px] whitespace-nowrap text-black [writing-mode:vertical-rl]">
          Terminal
        </span>
      </div>
    </div>
    <div className="mb-1 flex min-w-0 flex-1 flex-col border-t border-l border-[#a0a0a0] bg-white">
      <table className="w-full table-fixed border-collapse text-[11px]">
        <thead>
          <tr className="h-6">
            <th className="w-[188px] border-r border-[#e5e5e5] pl-[6px] text-left font-normal">
              Order <span className="pl-2 text-[8px]">/</span>
            </th>
            {terminalCols.map(([name, w], i) => (
              <th key={i} className={`border-r border-[#e5e5e5] pr-[5px] text-right font-normal ${w}`}>{name}</th>
            ))}
          </tr>
        </thead>
        <tbody>
          <tr className="h-5 bg-[#c4c4c4] font-bold">
            <td colSpan={11} className="pl-[7px]">
              <div className="flex items-center gap-2 whitespace-pre">
                <span className="h-[7px] w-[7px] rounded-full border border-[#888] bg-[#ddd]" />
                {'Balance: 1 000.00 EUR  Equity: 1 000.00  Free margin: 1 000.00'}
              </div>
            </td>
            <td className="pr-[5px] text-right">0.00</td>
          </tr>
        </tbody>
      </table>
      <div className="flex-1" />
      <div className="flex h-[21px] shrink-0 border-t border-black bg-[#efefef] pl-[2px] text-[11px] leading-[18px] whitespace-nowrap text-[#777]">
        <button type="button" className="-mt-px h-[20px] border border-t-0 border-r-2 border-b-2 border-black bg-white px-[9px] text-black">
          Trade
        </button>
        {terminalTabs.map(([t, n]) => (
          <div key={t} className="flex h-[18px] items-center">
            <button type="button" className={n ? 'flex pr-[11px] pl-[10px]' : 'px-[10px]'}>
              {t}
              {n && <span className="pt-[6px] pl-[2px] text-[8px] leading-[12px] font-bold text-[#ff0000]">{n}</span>}
            </button>
            <div className="h-[13px] w-px bg-[#666]" />
          </div>
        ))}
      </div>
    </div>
  </section>
);

const StatusBar = () => (
  <footer className="flex h-[23px] shrink-0 items-center border-t border-white bg-[#efefef] pl-[2px] text-[11px] leading-[18px] whitespace-nowrap">
    <div className="flex-1">For Help, press F1</div>
    <div className="h-[18px] w-[115px] border-l border-[#a0a0a0] pl-1">Default</div>
    <div className="h-[18px] w-[102px] border-l border-[#a0a0a0] pl-[5px]">2022.07.25 06:46</div>
    <div className="h-[18px] w-[71px] border-l border-[#a0a0a0] pl-[5px]">O: 1.02000</div>
    <div className="h-[18px] w-[71px] border-l border-[#a0a0a0] pl-[5px]">H: 1.02053</div>
    <div className="h-[18px] w-[68px] border-l border-[#a0a0a0] pl-[5px]">L: 1.01996</div>
    <div className="h-[18px] w-[70px] border-l border-[#a0a0a0] pl-[5px]">C: 1.02046</div>
    <div className="h-[18px] w-[66px] border-l border-[#a0a0a0] pl-[5px]">V: 191</div>
    <div className="flex h-[18px] w-[130px] items-center gap-1 border-l border-[#a0a0a0] pl-[5px]">
      <svg width="23" height="13" aria-hidden="true">
        {Array.from({ length: 8 }, (_, i) => (
          <g key={i}>
            <rect x={i * 3} y="0" width="2" height={10 - i} fill="#6b8e1e" />
            <rect x={i * 3} y={11 - i} width="2" height={2 + i} fill="#1d4f6b" />
          </g>
        ))}
      </svg>
      5089/1 kb
    </div>
  </footer>
);

const TaskItem: React.FC<{ label: string; bar?: boolean; active?: boolean; children: React.ReactNode }> = ({
  label,
  bar,
  active,
  children,
}) => (
  <button
    type="button"
    aria-label={label}
    className={`relative flex h-10 w-[49px] items-center justify-center ${active ? 'bg-[#4c5f69]' : ''}`}
  >
    {children}
    {bar && <span className={`absolute bottom-0 h-[2px] bg-[#76b9ed] ${active ? 'inset-x-0' : 'inset-x-1'}`} />}
  </button>
);

const Taskbar = () => (
  <div className="flex h-10 shrink-0 items-center bg-linear-to-r from-[#20373f] via-[#20353f] to-[#1b2644] text-white">
    <button type="button" aria-label="Start" className="flex h-10 w-12 items-center justify-center">
      <svg width="16" height="16"><path d="M0 2.300L7 1.300V7.500H0zM8 1.200L16 0v7.500H8zM0 8.500h7v6.200L0 13.700zM8 8.500h8V16l-8-1.200z" fill="#fff" /></svg>
    </button>
    <label className="relative flex h-10 w-[344px] items-center border border-[#c8c8c8] bg-[#f2f2f2] pl-3">
      <svg width="16" height="18" viewBox="0 0 16 18" aria-hidden="true">
        <circle cx="9.500" cy="6.500" r="5.300" stroke="#222" strokeWidth="1.300" fill="none" />
        <path d="M6 10.500L.8 16.500" stroke="#222" strokeWidth="1.400" />
      </svg>
      <input type="text" aria-label="Search" placeholder="Type here to search" className="w-[200px] bg-transparent pl-3 text-[14px] outline-none placeholder:text-[#333]" />
      <svg width="80" height="30" viewBox="0 0 80 30" className="absolute right-0 bottom-0" aria-hidden="true">
        <path d="M0 30l4-8 8-6 10 4 4 10z" fill="#c9cdec" />
        <path d="M8 18l7-9 9 2 2 12-10 4z" fill="#e4e4f4" />
        <path d="M15 9l6-5 7 3-4 8z" fill="#f4f0f6" />
        <path d="M24 11l3 10-10 9 16 0 4-12z" fill="#b3bbe4" />
        <path d="M26 9L36 1l6 4-4 10-10 4z" fill="#dbd5ea" />
        <path d="M36 1l11 1 3 9-12 14z" fill="#f5efee" />
        <path d="M47 2l4 9-8 15-5-1z" fill="#c3bfe2" />
        <path d="M50 8l9-5 6 7-6 13-10 3z" fill="#ebe6f3" />
        <path d="M59 3l6 7-4 10z" fill="#c2bfe0" />
        <path d="M62 16l9-7 8 6v15H58z" fill="#dcdaef" />
        <path d="M71 9l2 9-8 12h14V15z" fill="#f3efee" />
        <path d="M34 30l9-9 11 4 6 5z" fill="#cbc7e7" />
        <path d="M4 22l8 0 4 8H0z" fill="#a5b1df" />
      </svg>
    </label>
    <TaskItem label="Cortana">
      <svg width="16" height="16"><circle cx="8" cy="8" r="6.500" stroke="#fff" strokeWidth="2" fill="none" /></svg>
    </TaskItem>
    <TaskItem label="Task View">
      <svg width="17" height="16" fill="none" stroke="#fff">
        <path d="M.5 0v3.500h11V0M.5 16v-3.500h11V16M.5 5.500h11v5H.500zM14.500 0v16" />
        <path d="M13 4h3v3h-3z" fill="#fff" stroke="none" />
      </svg>
    </TaskItem>
    <TaskItem label="Microsoft Edge">
      <svg width="24" height="24" viewBox="0 0 24 24">
        <defs>
          <linearGradient id="edge" x1="0" x2="1"><stop offset="0" stopColor="#2aa7e8" /><stop offset="1" stopColor="#5ee06a" /></linearGradient>
        </defs>
        <circle cx="12" cy="12" r="12" fill="#1468c0" />
        <path d="M0 11C1 4 6 0 12 0c7 0 12 5 12 10 0 4-3 6-6 6-2 0-4-1-4-2 0-1 1-1 1-3 0-2-2-4-6-4C5 7 1 9 0 11z" fill="url(#edge)" />
        <path d="M9 9c-3 4-1 12 8 12 2 0 4-.6 5-1.500C17 25 7 24 5 17c-1-4 1-7 4-8z" fill="#0f4f9c" />
        <path d="M14 14c0 1 2 3 6 2l3-2c-1 4-3 5-5 5-5 0-6-3-4-5z" fill="#20353f" />
      </svg>
    </TaskItem>
    <TaskItem label="File Explorer">
      <svg width="24" height="22" viewBox="0 0 24 22">
        <path d="M1 2h8l2 2h12v16H1z" fill="#f7c64a" />
        <path d="M1 2h8l2 2-2 2H1z" fill="#d99a1e" />
        <path d="M5 21v-8c0-1 1-1.500 1.500-1.500h11c1 0 1.500.5 1.500 1.500v8h-4v-5H9v5z" fill="#3d98dd" />
      </svg>
    </TaskItem>
    <TaskItem label="Google Chrome" bar>
      <svg width="24" height="24" viewBox="0 0 24 24">
        <circle cx="12" cy="12" r="12" fill="#fcc934" />
        <path d="M12 12L1.600 6A12 12 0 0 1 22.400 6z" fill="#ea4335" />
        <path d="M12 12L1.600 6A12 12 0 0 0 12 24l5-9z" fill="#34a853" />
        <path d="M12 6h10.400A12 12 0 0 1 12 24l5.200-9z" fill="#fcc934" />
        <circle cx="12" cy="12" r="6" fill="#fff" />
        <circle cx="12" cy="12" r="4.700" fill="#4285f4" />
      </svg>
    </TaskItem>
    <TaskItem label="Microsoft Store">
      <svg width="24" height="24" viewBox="0 0 24 24">
        <path d="M7 6V2c0-.6.4-1 1-1h8c.6 0 1 .4 1 1v4" stroke="#2da8ef" strokeWidth="2" fill="none" />
        <path d="M1 5h22v16c0 2-1 3-3 3H4c-2 0-3-1-3-3z" fill="#f3f3f3" />
        <path d="M7 10h4.500v4.500H7z" fill="#f25022" />
        <path d="M12.500 10H17v4.500h-4.500z" fill="#7fba00" />
        <path d="M7 15.500h4.500V20H7z" fill="#00a4ef" />
        <path d="M12.500 15.500H17V20h-4.500z" fill="#ffb900" />
      </svg>
    </TaskItem>
    <TaskItem label="Mail">
      <svg width="24" height="24" viewBox="0 0 24 24">
        <path d="M0 9l12-8 12 8v14H0z" fill="#0f5fa8" />
        <path d="M2 8h20l-10 9z" fill="#f4f4f4" />
        <path d="M0 9l16 14H0z" fill="#2f9ee8" />
        <path d="M24 9L8 23h16z" fill="#38b6f5" />
      </svg>
    </TaskItem>
    <TaskItem label="Discord" bar>
      <svg width="26" height="26" viewBox="0 0 26 26">
        <circle cx="12" cy="12" r="12" fill="#5865f2" />
        <path d="M6 8c3-2 9-2 12 0 2 3 2 6 2 8-2 2-4 2-4 2l-1-2H9l-1 2s-2 0-4-2c0-2 0-5 2-8z" fill="#fff" />
        <circle cx="9" cy="12.500" r="1.700" fill="#5865f2" />
        <circle cx="15" cy="12.500" r="1.700" fill="#5865f2" />
        <circle cx="19" cy="18.500" r="7" fill="#e5484d" />
      </svg>
      <span className="absolute top-[19px] left-[24px] w-[14px] text-center text-[9px] leading-[14px] font-bold">9+</span>
    </TaskItem>
    <TaskItem label="XM MT4" bar active>
      <span className="flex h-6 w-6 items-center justify-center rounded-[3px] bg-[#0d0d0d] font-['Liberation_Sans',sans-serif] text-[11px] leading-6 font-bold italic">
        <span className="text-[#e02020]">X</span>M
      </span>
    </TaskItem>
    <TaskItem label="Forex Simulator" bar>
      <span className="flex h-6 w-6 flex-col items-center bg-linear-to-b from-white from-70% to-[#1fb5cf] pt-[2px] font-['Liberation_Serif',serif] text-[5px] leading-[6px] font-bold text-black">
        <span className="text-[#d02020]">soft4FX</span>
        <span>Forex</span>
        <span>Simulator</span>
      </span>
    </TaskItem>
    <div className="flex-1" />
    <svg width="24" height="16" viewBox="0 0 24 16" aria-hidden="true">
      <path d="M5 16a5 5 0 0 1 0-9C6 2 9 0 12 0s5 2 6 5c3 0 6 2 6 5.500S21 16 19 16z" fill="#a9c8f5" />
      <path d="M8 4c2-3 6-3 7 0" stroke="#dce9fd" strokeWidth="2" fill="none" />
    </svg>
    <span className="pl-2 text-[14px] whitespace-pre">19°C  Cloudy</span>
    <div className="flex items-center gap-2 pl-4" aria-hidden="true">
      <svg width="12" height="8"><path d="M1 7l5-5 5 5" stroke="#fff" strokeWidth="1.200" fill="none" /></svg>
      <svg width="16" height="16" fill="none" stroke="#fff"><path d="M4 2c2-2 6-2 8 0M4 14c2 2 6 2 8 0M3.500 4.500h7v7h-7zM10.500 7l3-1.500v5l-3-1.500" /></svg>
      <svg width="17" height="17" fill="none" stroke="#fff"><path d="M1.500 3.500h10v11h-10zM4 3l1-2h10v12l-3 2M4 10c0-3 4-3 4-1M8 7v2.500H5.500" /><circle cx="13" cy="13" r="3.500" fill="#e81123" stroke="none" /></svg>
      <svg width="16" height="15" fill="none" stroke="#fff"><path d="M5 3.500h10.500v7H5M10 10.500v3M7 13.500h6M.5 1.500h4v5h-4zM2.500 6.500v5h3" /></svg>
      <svg width="16" height="14" fill="none" stroke="#fff"><path d="M.5 5v4h3l4 3.500v-11L3.500 5zM9.500 4.500c1.500 1 1.500 4 0 5M11.500 3c2.500 2 2.500 6 0 8M13.500 1c3.500 3 3.500 9 0 12" /></svg>
    </div>
    <span className="w-9 pl-3 text-[11px]">ENG</span>
    <div className="w-[84px] text-center text-[11px] leading-[18px]">
      <div>3:37 pm</div>
      <div>10/01/2023</div>
    </div>
    <button type="button" aria-label="Notification center" className="relative mr-[13px] h-7 w-7">
      <svg width="28" height="28" viewBox="0 0 28 28">
        <path d="M4 5h16v13h-8l-4 4v-4H4z" fill="#fff" />
        <path d="M6.500 8.500h11M6.500 11.500h11M6.500 14.500h8" stroke="#1b2a42" strokeWidth="1.200" />
        <circle cx="19" cy="20" r="7.500" fill="#3a3f48" stroke="#9aa0a8" />
      </svg>
      <span className="absolute right-[2px] bottom-px w-[14px] text-center text-[11px] leading-[14px]">2</span>
    </button>
    <div className="mr-1 h-10 w-px bg-[#6a7080]" />
  </div>
);

const App: React.FC = () => (
  <div className="flex h-screen flex-col overflow-hidden bg-[#efefef] font-['Open_Sans',sans-serif] text-black">
    <header className="flex h-[23px] shrink-0 items-center bg-white pr-[2px] pl-[2px]">
      <span className="flex h-[15px] w-[15px] items-center justify-center rounded-[2px] bg-[#111] font-['Liberation_Sans',sans-serif] text-[8px] leading-none font-bold italic text-white">
        <span className="text-[#e02020]">X</span>M
      </span>
      <h1 className="flex-1 pl-[5px] text-[11px] whitespace-nowrap">
        22475809: XMAU-Demo - Demo Account - Trading Point of Financial Instruments Pty Ltd - [!STD_EURUSD,M1 (offline)]
      </h1>
      <div className="flex items-center">
        <button type="button" aria-label="Minimize" className="flex w-[46px] justify-center">
          <svg width="10" height="10"><path d="M0 5.500h10" stroke="#000" /></svg>
        </button>
        <button type="button" aria-label="Restore" className="flex w-[46px] justify-center">
          <svg width="10" height="10" fill="none" stroke="#000"><path d="M.5 2.500h7v7h-7zM2.500 2V.5h7v7H8" /></svg>
        </button>
        <button type="button" aria-label="Close" className="flex w-[46px] justify-center">
          <svg width="10" height="10"><path d="M0 0l10 10M10 0L0 10" stroke="#000" /></svg>
        </button>
      </div>
    </header>
    <MenuBar />
    <div className="shrink-0 border-t border-[#a0a0a0]">
      <div className="border-t border-white">
        <MainToolbar />
        <LineToolbar />
      </div>
    </div>
    <main className="flex min-h-0 flex-1 border-t border-[#808080]">
      <aside className="flex w-[187px] shrink-0 flex-col pb-[2px]">
        <MarketWatch />
        <Navigator />
      </aside>
      <div className="flex min-w-0 flex-1 flex-col border-l-2 border-[#808080]">
        <Chart />
        <div className="h-[2px] shrink-0 bg-white" />
        <ChartTabs />
      </div>
    </main>
    <Terminal />
    <StatusBar />
    <Taskbar />
  </div>
);

export default App;
